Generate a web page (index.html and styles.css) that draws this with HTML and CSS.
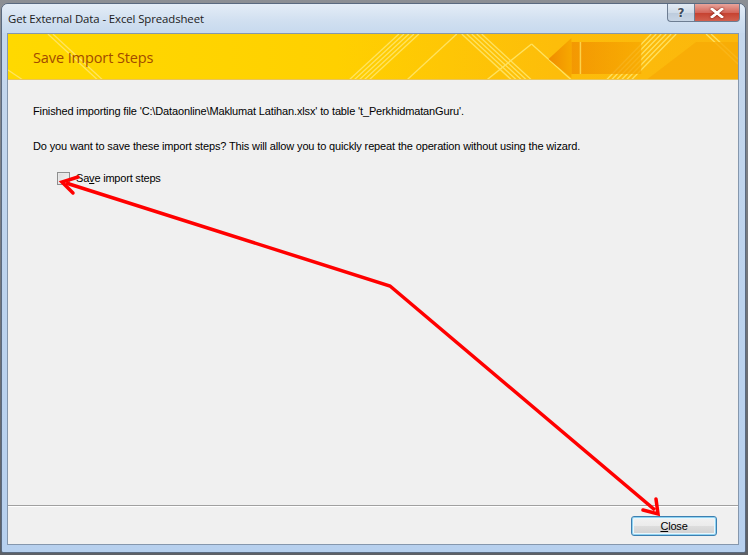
FILE: index.html
```html
<!DOCTYPE html>
<html>
<head>
<meta charset="utf-8">
<link rel="stylesheet" href="styles.css">
</head>
<body>
<div class="window">
  <div class="titlebar">
    <span class="title">Get External Data - Excel Spreadsheet</span>
    <div class="caption-btns">
      <div class="cbtn help">?</div>
      <div class="cbtn close">
        <svg width="14" height="10" viewBox="0 0 14 10"><path d="M2 1 L12 9 M12 1 L2 9" stroke="#fff" stroke-width="2.6" stroke-linecap="square"/><path d="M2 1 L12 9 M12 1 L2 9" stroke="#fff" stroke-width="2.2" stroke-linecap="round"/></svg>
      </div>
    </div>
  </div>
  <div class="client">
    <div class="banner">
      <svg class="banner-art" width="732" height="46" viewBox="0 0 732 46" preserveAspectRatio="none">
        <defs>
          <linearGradient id="bg" x1="0" x2="1" y1="0" y2="0">
            <stop offset="0" stop-color="#ffd900"/>
            <stop offset="0.45" stop-color="#ffd000"/>
            <stop offset="0.75" stop-color="#fdbd0a"/>
            <stop offset="1" stop-color="#fbb70c"/>
          </linearGradient>
          <linearGradient id="arr" x1="0" x2="1" y1="0" y2="0">
            <stop offset="0" stop-color="#f08c00"/>
            <stop offset="1" stop-color="#f7a800"/>
          </linearGradient>
        </defs>
        <rect width="732" height="46" fill="url(#bg)"/>
        <g stroke="#ffe66a" stroke-width="1.3" opacity="0.9">
          <line x1="342" y1="46" x2="392" y2="0"/>
          <line x1="347" y1="46" x2="397" y2="0"/>
          <line x1="352" y1="46" x2="402" y2="0"/>
          <line x1="357" y1="46" x2="407" y2="0"/>
          <line x1="362" y1="46" x2="412" y2="0"/>
          <line x1="400" y1="46" x2="450" y2="0"/>
          <line x1="455" y1="0" x2="505" y2="46"/>
          <line x1="460" y1="0" x2="510" y2="46"/>
          <line x1="465" y1="0" x2="515" y2="46"/>
          <line x1="470" y1="0" x2="520" y2="46"/>
          <line x1="475" y1="0" x2="525" y2="46"/>
          <line x1="480" y1="46" x2="525" y2="10"/>
          <line x1="525" y1="10" x2="565" y2="46"/>
          <line x1="600" y1="46" x2="645" y2="0"/>
          <line x1="605" y1="46" x2="650" y2="0"/>
          <line x1="610" y1="46" x2="655" y2="0"/>
          <line x1="615" y1="46" x2="660" y2="0"/>
          <line x1="620" y1="46" x2="665" y2="0"/>
          <line x1="625" y1="46" x2="670" y2="0"/>
          <line x1="700" y1="0" x2="732" y2="30"/>
          <line x1="705" y1="0" x2="732" y2="25"/>
          <line x1="40" y1="0" x2="90" y2="46"/>
          <line x1="45" y1="0" x2="95" y2="46"/>
          <line x1="0" y1="36" x2="15" y2="46"/>
        </g>
        <polygon points="542,25 565,4 565,44" fill="url(#arr)"/>
        <rect x="565" y="8" width="70" height="32" fill="url(#arr)" opacity="0.75"/>
        <line x1="574" y1="8" x2="574" y2="40" stroke="#fcd24a" stroke-width="1.5"/>
        <polygon points="640,46 690,8 732,8 732,46" fill="#f7aa05" opacity="0.8"/>
        <line x1="0" y1="45.5" x2="732" y2="45.5" stroke="#e9c45a" stroke-width="1"/>
      </svg>
      <span class="banner-title">Save Import Steps</span>
    </div>
    <div class="body">
      <p class="line first">Finished importing file 'C:\Dataonline\Maklumat Latihan.xlsx' to table 't_PerkhidmatanGuru'.</p>
      <p class="line second">Do you want to save these import steps? This will allow you to quickly repeat the operation without using the wizard.</p>
      <label class="check-row">
        <span class="checkbox"></span>
        <span class="check-label">Sa<u>v</u>e import steps</span>
      </label>
    </div>
    <div class="footer">
      <button class="btn"><u>C</u>lose</button>
    </div>
  </div>
  <svg class="arrows" width="748" height="555" viewBox="0 0 748 555">
    <polyline points="66,183 390,286 655,510" fill="none" stroke="#ff0000" stroke-width="3.5" stroke-linejoin="miter"/>
    <polyline points="78,177 62,182 73,193" fill="none" stroke="#ff0000" stroke-width="3.5" stroke-linecap="round"/>
    <polyline points="643,510 658,514 656,499" fill="none" stroke="#ff0000" stroke-width="3.5" stroke-linecap="round"/>
  </svg>
</div>
</body>
</html>
```
FILE: styles.css
```css
html, body {
  margin: 0;
  padding: 0;
}
body {
  width: 748px;
  height: 555px;
  overflow: hidden;
  background: linear-gradient(#8c8f94, #5d6066);
  font-family: "Liberation Sans", Arial, sans-serif;
}
.window {
  margin: 3px 2px 0 1px;
  width: 745px;
  height: 550px;
  border: 1px solid #5a6a80;
  border-radius: 7px 7px 2px 2px;
  box-sizing: border-box;
  background: linear-gradient(180deg, #d6e3f2 0px, #c5d7ec 30px, #bcd3ee 300px, #b7d0ee 550px);
  display: flex;
  flex-direction: column;
}
.titlebar {
  height: 29px;
  display: flex;
  align-items: flex-start;
  justify-content: space-between;
  background: linear-gradient(180deg, #e4edf7, #d0dff0 60%, #c7d9ee);
  border-radius: 6px 6px 0 0;
}
.title {
  font-family: "Open Sans", "Noto Sans", sans-serif;
  font-size: 11.4px;
  color: #1b1b1b;
  margin: 7px 0 0 6px;
  letter-spacing: -0.1px;
}
.caption-btns {
  display: flex;
  margin-right: 5px;
}
.cbtn {
  height: 17px;
  display: flex;
  align-items: center;
  justify-content: center;
  border: 1px solid #6d7d92;
  border-top: none;
  box-sizing: content-box;
}
.help {
  width: 26px;
  border-radius: 0 0 0 4px;
  border-right: none;
  background: linear-gradient(180deg, #e3ebf4, #cfdbe8 50%, #bccbdc 51%, #c7d5e5);
  font-family: "DejaVu Sans", sans-serif;
  font-size: 12px;
  font-weight: bold;
  color: #3f4c5c;
  text-shadow: 0 0 2px #fff;
}
.close {
  width: 44px;
  border-radius: 0 0 4px 0;
  background: linear-gradient(180deg, #e8a49b, #d4675c 50%, #c5402f 51%, #d1604e);
}
.close svg {
  filter: drop-shadow(0 0 1px #7a1d14);
}
.client {
  flex: 1;
  margin: 0 6px 7px 5px;
  border: 1px solid #8597ad;
  background: #f0f0f0;
  display: flex;
  flex-direction: column;
}
.banner {
  position: relative;
  height: 46px;
  display: flex;
  align-items: center;
}
.banner-art {
  position: absolute;
  left: 0;
  top: 0;
  width: 100%;
  height: 100%;
}
.banner-title {
  position: relative;
  margin-left: 25px;
  font-family: "Open Sans", "Noto Sans", sans-serif;
  font-size: 14.5px;
  color: #a24b00;
  letter-spacing: -0.1px;
}
.body {
  flex: 1;
  padding: 0 0 0 25px;
  font-size: 11px;
  color: #000;
}
.line {
  margin: 0;
  line-height: 13px;
  letter-spacing: -0.14px;
}
.first {
  margin-top: 25px;
}
.second {
  margin-top: 22px;
}
.check-row {
  display: flex;
  align-items: center;
  margin: 19px 0 0 24px;
  gap: 6px;
  letter-spacing: -0.2px;
}
.checkbox {
  width: 11px;
  height: 11px;
  border: 1px solid #8e8f8f;
  background: linear-gradient(135deg, #dcdcdc, #f6f6f6);
  box-shadow: inset 0 0 0 1px #e8e8e8;
}
.check-label {
  line-height: 13px;
}
.check-label u, .btn u {
  text-decoration-thickness: 1px;
  text-underline-offset: 1px;
}
.footer {
  height: 38px;
  border-top: 1px solid #a0a0a0;
  box-shadow: inset 0 1px 0 #fff;
  display: flex;
  justify-content: flex-end;
  align-items: flex-start;
  padding-right: 21px;
}
.btn {
  margin-top: 10px;
  width: 86px;
  height: 20px;
  border: 1px solid #3c7fb1;
  border-radius: 3px;
  background: linear-gradient(180deg, #f2f2f2, #ebebeb 50%, #dddddd 51%, #cfcfcf);
  box-shadow: inset 0 0 0 1px #8fd2f0, inset 0 0 0 2px #e9f6fd;
  font-family: "Liberation Sans", Arial, sans-serif;
  font-size: 11px;
  color: #000;
  padding: 0;
  letter-spacing: -0.2px;
}
.arrows {
  position: absolute;
  left: 0;
  top: 0;
  pointer-events: none;
}
```
